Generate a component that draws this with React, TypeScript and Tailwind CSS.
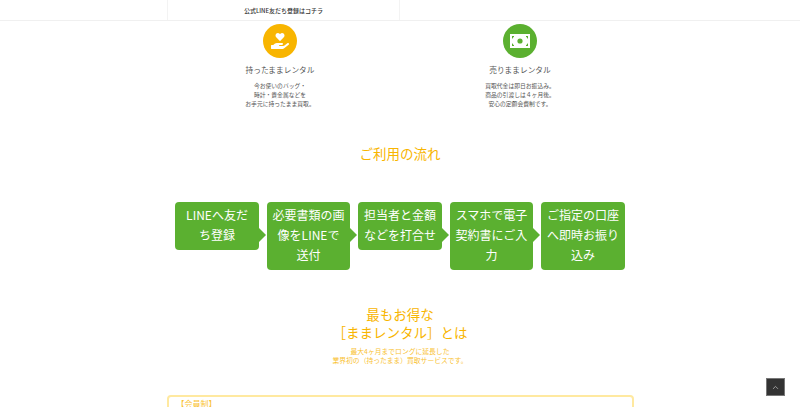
import { FaHandHoldingHeart } from "react-icons/fa";
import { FiChevronUp } from "react-icons/fi";

const steps = [
  { lines: ["LINEへ友だ", "ち登録"] },
  { lines: ["必要書類の画", "像をLINEで", "送付"] },
  { lines: ["担当者と金額", "などを打合せ"] },
  { lines: ["スマホで電子", "契約書にご入", "力"] },
  { lines: ["ご指定の口座", "へ即時お振り", "込み"] },
];

function MoneyIcon() {
  return (
    <svg width="20" height="14" viewBox="0 0 20 14">
      <rect x="0" y="0" width="20" height="14" fill="#fff" />
      <circle cx="10" cy="7" r="2.6" fill="#5bb030" />
      <rect x="2" y="2" width="2" height="1.2" fill="#5bb030" />
      <rect x="16" y="2" width="2" height="1.2" fill="#5bb030" />
      <rect x="2" y="10.8" width="2" height="1.2" fill="#5bb030" />
      <rect x="16" y="10.8" width="2" height="1.2" fill="#5bb030" />
      <rect x="2" y="3" width="1" height="1.4" fill="#5bb030" />
      <rect x="17" y="3" width="1" height="1.4" fill="#5bb030" />
      <rect x="2" y="9.6" width="1" height="1.4" fill="#5bb030" />
      <rect x="17" y="9.6" width="1" height="1.4" fill="#5bb030" />
    </svg>
  );
}

function Feature({
  icon,
  color,
  title,
  lines,
}: {
  icon: React.ReactNode;
  color: string;
  title: string;
  lines: string[];
}) {
  return (
    <div className="flex w-[240px] flex-col items-center">
      <div className={`flex h-[34px] w-[34px] items-center justify-center rounded-full ${color}`}>
        {icon}
      </div>
      <h3 className="mt-[4.5px] text-[7.7px] leading-[14px] font-normal text-[#555]">
        {title}
      </h3>
      <p className="mt-[4px] text-center text-[5.8px] leading-[9px] text-[#555]">
        {lines.map((l) => (
          <span key={l} className="block">
            {l}
          </span>
        ))}
      </p>
    </div>
  );
}

export default function App() {
  return (
    <div className="relative h-[407px] w-[800px] overflow-hidden bg-white font-['Noto_Sans_CJK_JP','Noto_Sans',sans-serif]">
      <div className="h-[21px] border-b border-[#f0f0f0]">
        <div className="mx-auto w-[466px]">
          <div className="flex h-[20px] w-[233px] items-center justify-center border-x border-[#f3f3f3] text-[6px] font-medium text-[#333]">
            公式LINE友だち登録はコチラ
          </div>
        </div>
      </div>

      <div className="mt-[3px] flex justify-center">
        <Feature
          color="bg-[#f8b500]"
          icon={<FaHandHoldingHeart className="text-[18px] text-white" />}
          title="持ったままレンタル"
          lines={["今お使いのバッグ・", "時計・貴金属などを", "お手元に持ったまま買取。"]}
        />
        <Feature
          color="bg-[#5bb030]"
          icon={<MoneyIcon />}
          title="売りままレンタル"
          lines={["買取代金は即日お振込み。", "商品の引渡しは４ヶ月後。", "安心の定額会費制です。"]}
        />
      </div>

      <h2 className="mt-[35px] text-center text-[13.5px] leading-[20px] font-normal text-[#f8b500]">
        ご利用の流れ
      </h2>

      <div className="mt-[39.5px] flex items-start justify-center gap-[8px]">
        {steps.map((s, i) => (
          <div
            key={i}
            className="relative w-[83.5px] rounded-[4px] bg-[#5bb030] pt-[3px] pb-[5px] text-center text-[12px] leading-[20px] text-white"
          >
            {s.lines.map((l) => (
              <span key={l} className="block whitespace-nowrap">
                {l}
              </span>
            ))}
            {i < steps.length - 1 && (
              <span className="absolute top-[26px] left-full h-0 w-0 border-y-[7px] border-l-[7px] border-y-transparent border-l-[#5bb030]" />
            )}
          </div>
        ))}
      </div>

      <h2 className="mt-[34.5px] text-center text-[13.5px] leading-[18px] font-normal text-[#f8b500]">
        最もお得な
        <br />
        ［ままレンタル］とは
      </h2>
      <p className="mt-[6px] text-center text-[6.8px] leading-[9.5px] text-[#f9c233]">
        最大4ヶ月までロングに延長した
        <br />
        業界初の（持ったまま）買取サービスです。
      </p>

      <div className="mx-auto mt-[29.5px] h-[40px] w-[467px] rounded-[4px] border-2 border-[#ffe9a0] px-[8px] text-[8px] leading-[13px] text-[#f9c233]">
        【会員制】
      </div>

      <button className="absolute top-[378px] left-[766px] flex h-[18px] w-[19px] items-center justify-center border border-[#777] bg-[#333] text-[#bbb]">
        <FiChevronUp className="text-[9px]" />
      </button>
    </div>
  );
}
